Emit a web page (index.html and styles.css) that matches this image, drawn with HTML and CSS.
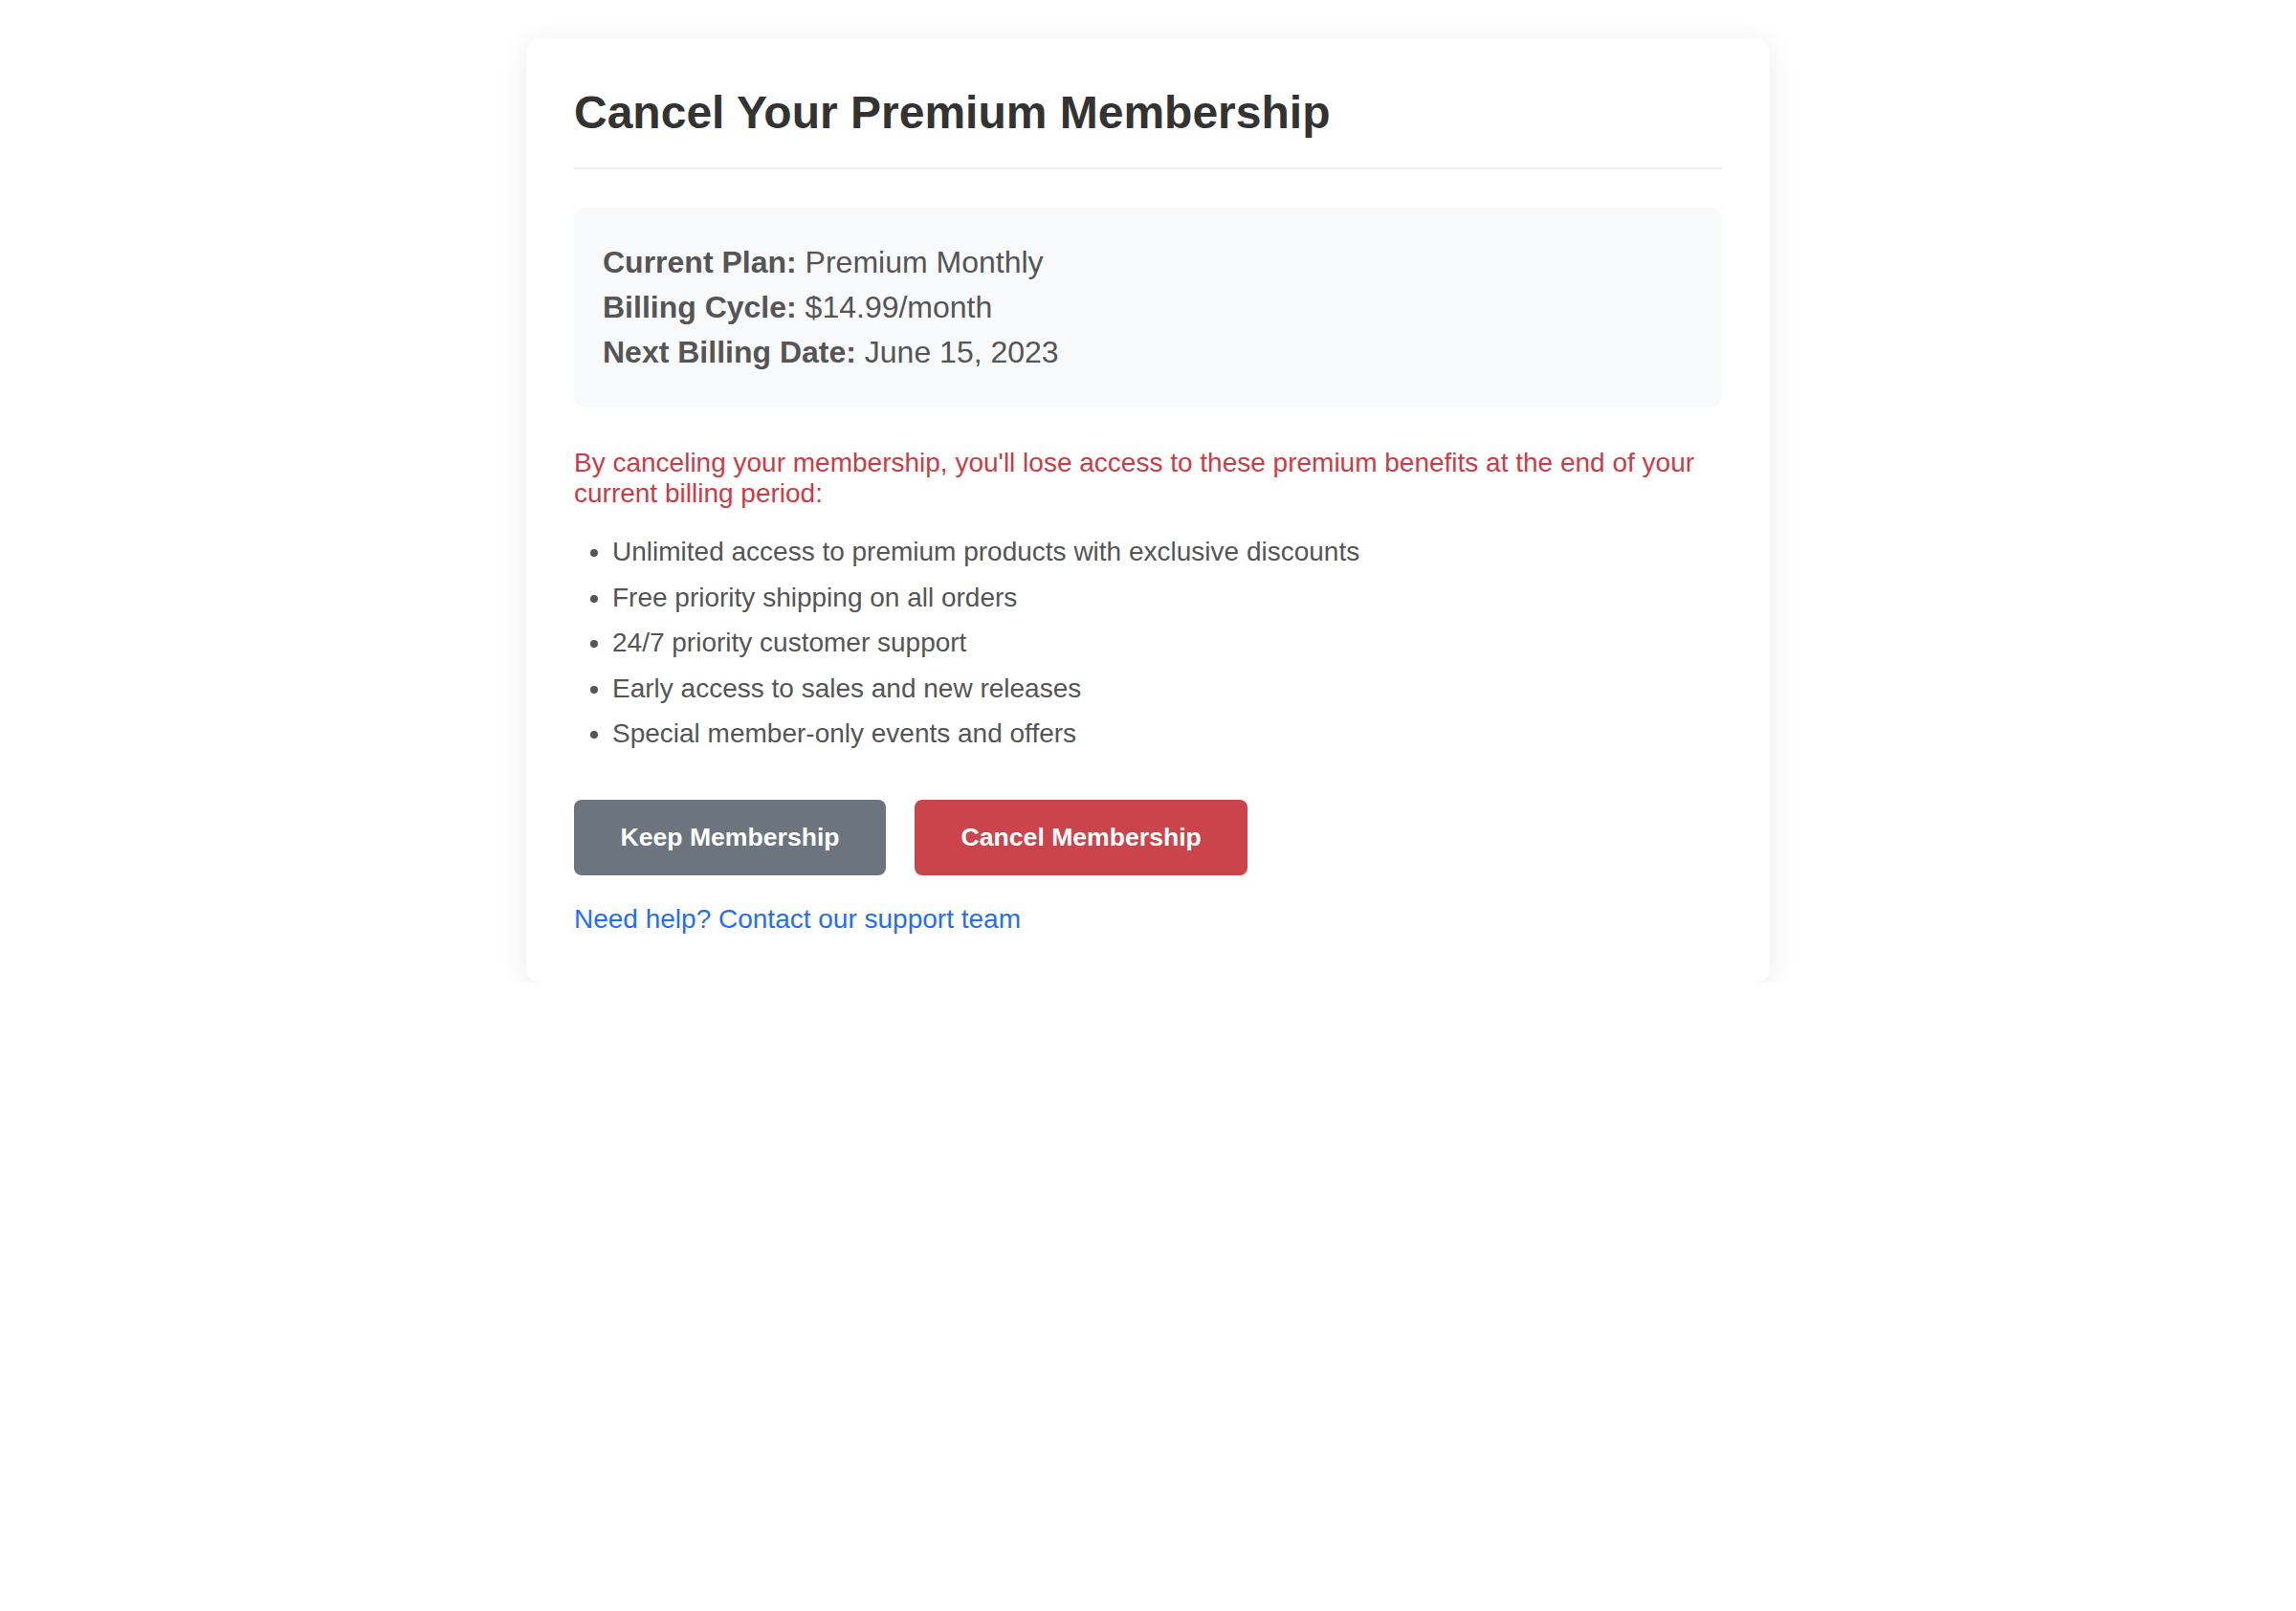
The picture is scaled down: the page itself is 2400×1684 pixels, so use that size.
FILE: index.html
```html
<!DOCTYPE html>
<html lang="en">
<head>
<meta charset="utf-8">
<title>Cancel Your Premium Membership</title>
<link rel="stylesheet" href="styles.css">
</head>
<body>
  <main class="card">
    <h1 class="title">Cancel Your Premium Membership</h1>
    <section class="plan">
      <div class="plan-row"><strong>Current Plan:</strong> Premium Monthly</div>
      <div class="plan-row"><strong>Billing Cycle:</strong> $14.99/month</div>
      <div class="plan-row"><strong>Next Billing Date:</strong> June 15, 2023</div>
    </section>
    <p class="warning">By canceling your membership, you'll lose access to these premium benefits at the end of your current billing period:</p>
    <ul class="benefits">
      <li>Unlimited access to premium products with exclusive discounts</li>
      <li>Free priority shipping on all orders</li>
      <li>24/7 priority customer support</li>
      <li>Early access to sales and new releases</li>
      <li>Special member-only events and offers</li>
    </ul>
    <div class="actions">
      <button class="btn btn-keep" type="button">Keep Membership</button>
      <button class="btn btn-cancel" type="button">Cancel Membership</button>
    </div>
    <a class="help" href="#">Need help? Contact our support team</a>
  </main>
</body>
</html>
```

FILE: styles.css
```css
html, body {
  margin: 0;
  padding: 0;
  background: #ffffff;
}

body {
  font-family: "Liberation Sans", Arial, Helvetica, sans-serif;
  font-size: 28px;
  color: #555555;
  padding-top: 40px;
}

.card {
  display: block;
  width: 1200px;
  margin: 0 auto;
  padding: 50px;
  background: #ffffff;
  border-radius: 15px;
  box-shadow: 0 5px 30px rgba(0, 0, 0, 0.08);
}

.title {
  margin: 0 0 40px;
  padding-bottom: 30px;
  border-bottom: 2px solid #eeeeee;
  font-size: 48px;
  font-weight: 700;
  color: #333333;
  line-height: normal;
}

.plan {
  background: #f8f9fa;
  border-radius: 12px;
  padding: 34px 30px;
  font-size: 32px;
  line-height: 47px;
  color: #555555;
}

.plan strong {
  font-weight: 700;
}

.warning {
  margin: 42px 0 0;
  color: #cf3a44;
  line-height: normal;
}

.benefits {
  margin: 29px 0 0;
  padding-left: 40px;
  color: #555555;
}

.benefits li {
  line-height: normal;
  margin-bottom: 15.5px;
}

.benefits li:last-child {
  margin-bottom: 0;
}

.actions {
  display: flex;
  gap: 30px;
  margin-top: 53px;
}

.btn {
  font-family: "Liberation Sans", Arial, Helvetica, sans-serif;
  font-size: 26.6px;
  font-weight: 700;
  line-height: normal;
  color: #ffffff;
  border: none;
  border-radius: 8px;
  padding: 24px 48.5px;
  cursor: pointer;
}

.btn-keep {
  background: #6c757d;
}

.btn-cancel {
  background: #cb444b;
}

.help {
  display: block;
  margin-top: 30px;
  color: #1f6ff5;
  text-decoration: none;
  line-height: normal;
  width: max-content;
}
```
